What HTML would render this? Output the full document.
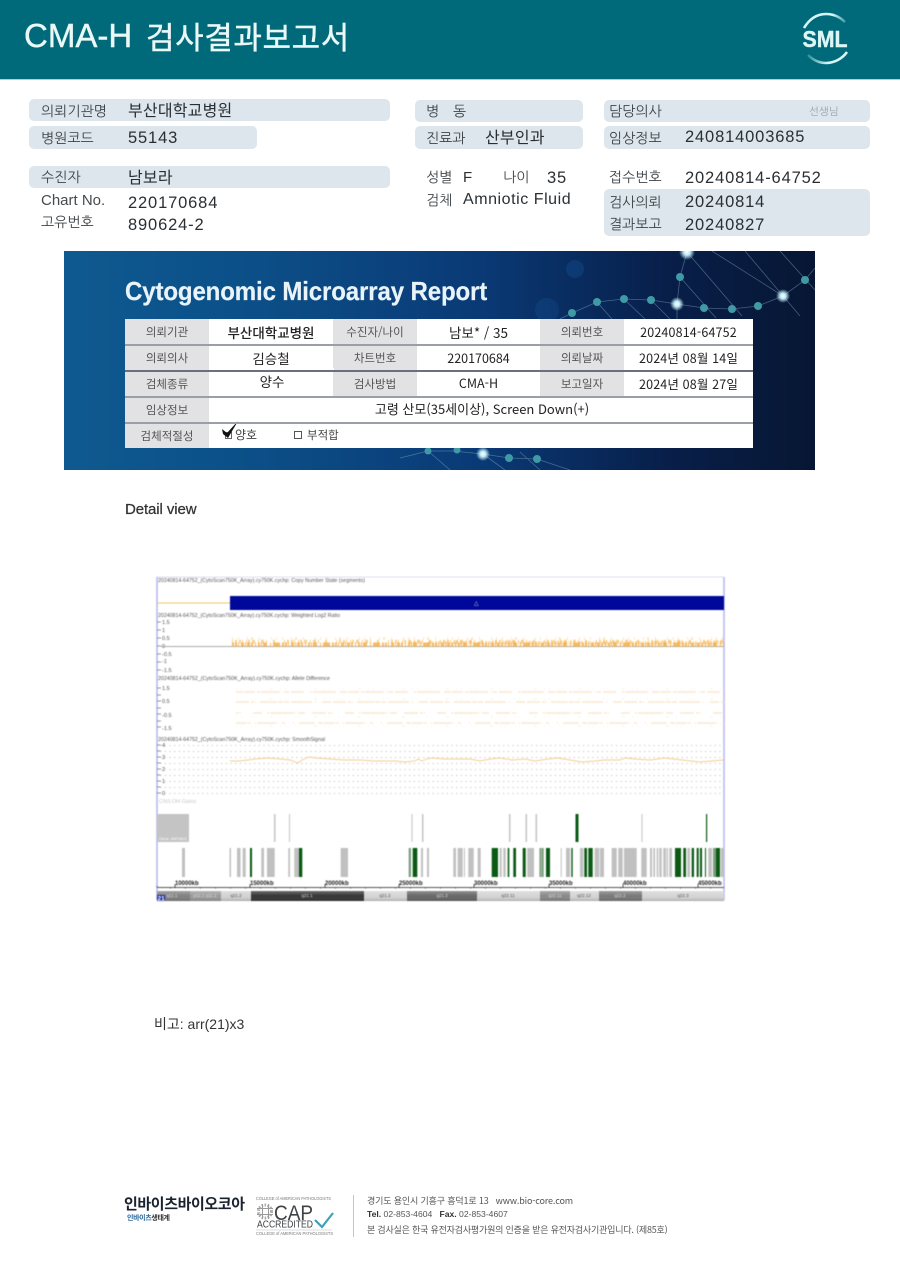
<!DOCTYPE html>
<html lang="ko"><head><meta charset="utf-8"><title>CMA-H 검사결과보고서</title>
<style>
html,body{margin:0;padding:0;background:#fff}
#p{position:relative;width:900px;height:1271px;overflow:hidden;background:#fff;font-family:"Liberation Sans","Noto Sans CJK KR",sans-serif;color:#2a2f33}
.t{position:absolute;white-space:nowrap;line-height:20px;height:20px}
.l{font-family:"NanumGothic","Noto Sans CJK KR",sans-serif;font-size:14px;color:#3d4347}
.v{font-size:16.5px;letter-spacing:.85px;color:#2a2f33}
.k{font-family:"Noto Sans CJK KR",sans-serif;font-size:16px;letter-spacing:.2px;color:#2a2f33}
.b{position:absolute;background:#dce6ec;border-radius:5px}
.c{position:absolute;display:flex;align-items:center;justify-content:center;box-sizing:border-box;font-family:"Noto Sans CJK KR",sans-serif;white-space:nowrap}
.h{background:#e2e2e4;color:#555;font-size:11.5px}
.d{background:#fff;color:#222;font-size:12.5px}
.r{position:absolute;left:125px;width:628px;height:2px;background:#9a9ea6}
</style></head><body><div id="p">

<div style="position:absolute;left:0;top:0;width:900px;height:79px;background:#006a7a;border-bottom:1px solid #8fdce0"></div>
<div class="t" style="left:24px;top:16px;height:40px;line-height:40px;font-size:33px;color:#eaf8f8;-webkit-text-stroke:.4px #eaf8f8">CMA-H</div>
<div class="t" style="left:146px;top:16px;height:40px;line-height:40px;font-family:'Noto Sans CJK KR',sans-serif;font-size:31px;letter-spacing:.6px;color:#eaf8f8;-webkit-text-stroke:.4px #eaf8f8">검사결과보고서</div>

<svg style="position:absolute;left:790px;top:5px" width="70" height="65" viewBox="0 0 70 65">
<defs><linearGradient id="a1" x1="0" x2="1"><stop offset="0" stop-color="#d8f5f3"/><stop offset=".7" stop-color="#d8f5f3"/><stop offset="1" stop-color="#3f9ea6"/></linearGradient>
<linearGradient id="a2" x1="0" x2="1"><stop offset="0" stop-color="#2f8f9a"/><stop offset=".5" stop-color="#d8f5f3"/><stop offset="1" stop-color="#d8f5f3"/></linearGradient></defs>
<path d="M14 23C20 13 28 9 36 9C44 9 50 12 55 17" fill="none" stroke="url(#a1)" stroke-width="2.6"/>
<path d="M18 50C24 56 30 58 36 58C44 58 52 54 57 47" fill="none" stroke="url(#a2)" stroke-width="2.6"/>
<text x="12.500" y="42" font-family="Liberation Sans" font-weight="700" font-size="23" fill="#dcf6f4" stroke="#dcf6f4" stroke-width=".4" textLength="45" lengthAdjust="spacingAndGlyphs">SML</text>
</svg>

<div class="b" style="left:29px;top:99px;width:361px;height:22px"></div>
<div class="b" style="left:29px;top:126px;width:228px;height:23px"></div>
<div class="b" style="left:29px;top:166px;width:361px;height:22px"></div>
<div class="b" style="left:415px;top:100px;width:168px;height:22px"></div>
<div class="b" style="left:415px;top:126px;width:168px;height:23px"></div>
<div class="b" style="left:604px;top:100px;width:266px;height:22px"></div>
<div class="b" style="left:604px;top:126px;width:266px;height:23px"></div>
<div class="b" style="left:604px;top:189px;width:266px;height:47px"></div>

<div class="t l" style="left:41px;top:102px">의뢰기관명</div>
<div class="t k" style="left:128px;top:99px">부산대학교병원</div>
<div class="t l" style="left:41px;top:129px">병원코드</div>
<div class="t v" style="left:128px;top:128px">55143</div>
<div class="t l" style="left:41px;top:168px">수진자</div>
<div class="t k" style="left:128px;top:166px">남보라</div>
<div class="t" style="left:41px;top:191px;font-size:15px;color:#454b4f">Chart No.</div>
<div class="t v" style="left:128px;top:193px">220170684</div>
<div class="t l" style="left:41px;top:213px">고유번호</div>
<div class="t v" style="left:128px;top:215px">890624-2</div>

<div class="t l" style="left:426px;top:102px">병</div>
<div class="t l" style="left:453px;top:102px">동</div>
<div class="t l" style="left:426px;top:129px">진료과</div>
<div class="t k" style="left:485px;top:126px">산부인과</div>
<div class="t l" style="left:426px;top:168px">성별</div>
<div class="t v" style="left:463px;top:168px;font-size:15px">F</div>
<div class="t l" style="left:503px;top:168px">나이</div>
<div class="t v" style="left:547px;top:168px">35</div>
<div class="t l" style="left:426px;top:191px">검체</div>
<div class="t" style="left:463px;top:190px;font-size:16px;color:#2a2f33;letter-spacing:.55px">Amniotic Fluid</div>

<div class="t l" style="left:609px;top:102px">담당의사</div>
<div class="t" style="left:809px;top:102px;font-family:'NanumGothic',sans-serif;font-size:10.5px;color:#9aa3a8">선생님</div>
<div class="t l" style="left:609px;top:129px">임상정보</div>
<div class="t v" style="left:685px;top:127px">240814003685</div>
<div class="t l" style="left:609px;top:168px">접수번호</div>
<div class="t v" style="left:685px;top:168px">20240814-64752</div>
<div class="t l" style="left:609px;top:193px">검사의뢰</div>
<div class="t v" style="left:685px;top:192px">20240814</div>
<div class="t l" style="left:609px;top:215px">결과보고</div>
<div class="t v" style="left:685px;top:215px">20240827</div>

<!-- banner -->
<svg style="position:absolute;left:64px;top:251px;filter:blur(.3px)" width="751" height="219" viewBox="64 251 751 219">
<defs>
<linearGradient id="bg" x1="0" x2="1" y1="0" y2="0"><stop offset="0" stop-color="#0e5a90"/><stop offset=".25" stop-color="#0c4f88"/><stop offset=".55" stop-color="#0a3a76"/><stop offset=".8" stop-color="#081f4a"/><stop offset="1" stop-color="#071633"/></linearGradient>
<radialGradient id="gl"><stop offset="0" stop-color="#fff"/><stop offset=".4" stop-color="#bfe9f5"/><stop offset="1" stop-color="#bfe9f5" stop-opacity="0"/></radialGradient>
</defs>
<rect x="64" y="251" width="751" height="219" fill="url(#bg)"/>
<g fill="none" stroke="#9fc6d8" stroke-opacity=".4" stroke-width=".8">
<path d="M560 319L572 313L597 302L624 299L651 300L677 304L704 308L732 309L758 306L783 296L805 280L815 268"/>
<path d="M687 252L680 277L677 304M687 252L742 316M712 251L783 296M745 251L800 316M780 251L815 290M680 277L716 318M597 302L612 319M624 299L645 319M651 300L670 319M677 304L677 319"/>
<path d="M400 458L428 451L453 451L483 454L509 458L537 459L570 470M428 451L450 470M483 454L505 470M520 452L540 470"/>
</g>
<g fill="#3f9aa6"><circle cx="572" cy="313" r="4"/><circle cx="597" cy="302" r="4"/><circle cx="624" cy="299" r="4"/><circle cx="651" cy="300" r="4"/><circle cx="704" cy="308" r="4"/><circle cx="732" cy="309" r="4"/><circle cx="758" cy="306" r="4"/><circle cx="805" cy="280" r="4"/><circle cx="680" cy="277" r="4"/><circle cx="428" cy="451" r="3.5"/><circle cx="457" cy="450" r="3.5"/><circle cx="509" cy="458" r="4"/><circle cx="537" cy="459" r="4"/></g>
<circle cx="677" cy="304" r="7" fill="url(#gl)"/><circle cx="783" cy="296" r="7" fill="url(#gl)"/><circle cx="687" cy="252" r="8" fill="url(#gl)"/><circle cx="483" cy="454" r="7" fill="url(#gl)"/>
<circle cx="575" cy="269" r="9" fill="#1b62b0" opacity=".25"/><circle cx="547" cy="310" r="12" fill="#1b62b0" opacity=".2"/>
</svg>
<div class="t" style="left:125px;top:274px;height:34px;line-height:34px;font-size:26px;font-weight:700;color:#e8f4fa;letter-spacing:-.15px;transform:scaleX(.925);transform-origin:left center;-webkit-text-stroke:.2px #e8f4fa">Cytogenomic Microarray Report</div>

<div style="position:absolute;left:125px;top:319px;width:628px;height:129px;background:#fff"></div>
<div class="c h" style="left:125px;top:319px;width:84px;height:25px">의뢰기관</div>
<div class="c d" style="left:209px;top:319px;width:124px;height:25px;font-size:13.5px;font-weight:500">부산대학교병원</div>
<div class="c h" style="left:333px;top:319px;width:84px;height:25px">수진자/나이</div>
<div class="c d" style="left:417px;top:319px;width:123px;height:25px;font-size:13.5px">남보* / 35</div>
<div class="c h" style="left:540px;top:319px;width:84px;height:25px">의뢰번호</div>
<div class="c d" style="left:624px;top:319px;width:129px;height:25px;letter-spacing:.15px">20240814-64752</div>

<div class="c h" style="left:125px;top:345px;width:84px;height:25px">의뢰의사</div>
<div class="c d" style="left:209px;top:345px;width:124px;height:25px;font-size:13.5px">김승철</div>
<div class="c h" style="left:333px;top:345px;width:84px;height:25px">차트번호</div>
<div class="c d" style="left:417px;top:345px;width:123px;height:25px">220170684</div>
<div class="c h" style="left:540px;top:345px;width:84px;height:25px">의뢰날짜</div>
<div class="c d" style="left:624px;top:345px;width:129px;height:25px;letter-spacing:.15px">2024년 08월 14일</div>

<div class="c h" style="left:125px;top:371px;width:84px;height:25px">검체종류</div>
<div class="c d" style="left:210px;top:368px;width:124px;height:25px;font-size:13.5px">양수</div>
<div class="c h" style="left:333px;top:371px;width:84px;height:25px">검사방법</div>
<div class="c d" style="left:417px;top:370px;width:123px;height:25px">CMA-H</div>
<div class="c h" style="left:540px;top:371px;width:84px;height:25px">보고일자</div>
<div class="c d" style="left:624px;top:371px;width:129px;height:25px;letter-spacing:.15px">2024년 08월 27일</div>

<div class="c h" style="left:125px;top:397px;width:84px;height:25px">임상정보</div>
<div class="c d" style="left:209px;top:396px;width:544px;height:25px;font-size:13px"><span style="position:relative;left:1px">고령 산모(35세이상), Screen Down(+)</span></div>
<div class="c h" style="left:125px;top:423px;width:84px;height:25px">검체적절성</div>
<div class="t" style="left:235px;top:425px;font-family:'Noto Sans CJK KR',sans-serif;font-size:12px;color:#444">양호</div>
<div class="t" style="left:307px;top:425px;font-family:'Noto Sans CJK KR',sans-serif;font-size:11.5px;color:#444">부적합</div>
<div style="position:absolute;left:225px;top:432px;width:5px;height:5px;border:1px solid #666"></div>
<div style="position:absolute;left:294px;top:431px;width:6px;height:6px;border:1px solid #555"></div>
<svg style="position:absolute;left:220px;top:420px" width="20" height="20"><path d="M2 9L7 13L18 1L8 18L3 14Z" fill="#111"/></svg>
<div class="r" style="top:344px;height:1.5px"></div>
<div class="r" style="top:370px;background:#6a7080;height:1.5px"></div>
<div class="r" style="top:396px;height:1.5px"></div>
<div class="r" style="top:422px;height:1.5px"></div>

<div class="t" style="left:125px;top:500px;font-size:15px;letter-spacing:-.1px;color:#333;-webkit-text-stroke:.25px #333">Detail view</div>

<!-- chart -->
<svg style="position:absolute;left:150px;top:570px;filter:blur(.5px)" width="580" height="336" viewBox="150 570 580 336" font-family="Liberation Sans">
<rect x="156" y="577" width="568" height="324" fill="#fff"/>
<path d="M157 577V900M724 577V900" stroke="#b9b9ee" stroke-width="1.6"/>
<path d="M156 577H724" stroke="#d5d5f3" stroke-width=".8"/>
<g font-size="5.6" fill="#555">
<text x="158" y="582" textLength="207" lengthAdjust="spacingAndGlyphs">20240814-64752_(CytoScan750K_Array).cy750K.cychp: Copy Number State (segments)</text>
<text x="158" y="617" textLength="182" lengthAdjust="spacingAndGlyphs">20240814-64752_(CytoScan750K_Array).cy750K.cychp: Weighted Log2 Ratio</text>
<text x="158" y="680" textLength="172" lengthAdjust="spacingAndGlyphs">20240814-64752_(CytoScan750K_Array).cy750K.cychp: Allele Difference</text>
<text x="158" y="741" textLength="167" lengthAdjust="spacingAndGlyphs">20240814-64752_(CytoScan750K_Array).cy750K.cychp: SmoothSignal</text>
<text x="162" y="624">1.5</text><text x="162" y="632">1</text><text x="162" y="640">0.5</text><text x="162" y="648">0</text><text x="162" y="656">-0.5</text><text x="162" y="663">-1</text><text x="162" y="672">-1.5</text>
<text x="162" y="690">1.5</text><text x="162" y="703">0.5</text><text x="162" y="717">-0.5</text><text x="162" y="730">-1.5</text>
<text x="162" y="747">4</text><text x="162" y="759">3</text><text x="162" y="771">2</text><text x="162" y="783">1</text><text x="162" y="795">0</text>
<text x="159" y="803" fill="#c8c8c8">CN/LOH Gains</text>
</g>
<path d="M157 622h4M157 630h4M157 638h4M157 646h4M157 654h4M157 662h4M157 670h4M157 688h4M157 695h4M157 701h4M157 708h4M157 714h4M157 721h4M157 727h4M157 745h4M157 751h4M157 757h4M157 763h4M157 769h4M157 775h4M157 781h4M157 787h4M157 793h4" stroke="#777" stroke-width=".7"/>

<path d="M157 603H230" stroke="#f3c665" stroke-width="1"/>
<rect x="230" y="596" width="494" height="14" fill="#00089a"/>
<text x="474" y="605" font-size="6" fill="#ccc">△</text>

<path d="M161 646.500H724" stroke="#aaa" stroke-width=".9"/>
<g fill="none" stroke="#f4a52c">
<path d="M232 644.500H724" stroke-width="4" stroke-opacity=".75" stroke-dasharray="2 1 2 1 1 2 3 1 1 1 3 1 2 2 1 2 2 1 1 1 4 3 1 2 7 2"/>
<path d="M232 641.500H724" stroke-width="3.500" stroke-opacity=".5" stroke-dasharray="1 2 2 2 2 1 1 3 1 1 2 2 3 3 1 2 3 2 1 6 2 9"/>
<path d="M232 638.500H724" stroke-width="2.500" stroke-opacity=".3" stroke-dasharray="1 5 1 8 1 3 2 6 1 11 1 4"/>
<path d="M410 643H724" stroke-width="4" stroke-opacity=".35" stroke-dasharray="2 1 3 2 1 1 2 6 5 2"/>
</g>
<g fill="none" stroke="#fbe3c6" stroke-width="1.300">
<path d="M236 692H724" stroke-dasharray="7 1 11 2 3 1 19 3 1 1 4 2 13 6 2 1 23 4"/>
<path d="M236 702H724" stroke-dasharray="13 2 3 1 1 4 17 1 5 1 5 2 21 3 1 6 9 2"/>
<path d="M236 713H724" stroke-dasharray="3 1 1 12 9 5 2 1 24 1 1 2 7 7 14 2"/>
<path d="M236 723H724" stroke-dasharray="11 1 3 3 1 2 19 1 1 4 3 8 1 5 16 3 5 1"/>
<path d="M236 689H724M236 699H724M236 717H724M236 726H724" stroke-width="1" stroke-opacity=".5" stroke-dasharray="1 4 1 9 1 3 1 14 3 7"/>
</g>
<g stroke="#c4c4c4" stroke-width="1.100" stroke-dasharray="1.200 3.500"><path d="M160 745.500H724M160 751.500H724M160 757.500H724M160 763.500H724M160 769.500H724M160 775.500H724M160 781.500H724M160 787.500H724M160 793.500H724"/></g>
<polyline fill="none" stroke="#f3cd8f" stroke-width=".9" points="230,761 240,761 248,760 255,759 268,758 280,759 290,760 298,763 302,760 309,757 316,758 330,759 345,760 360,760 375,761 395,761 405,762 415,761 418,759 422,761 426,759 432,758 445,759 470,759 480,761 490,759 500,758 512,760 525,759 535,761 548,759 558,758 570,760 582,762 595,761 605,760 620,760 625,758 635,759 650,760 665,758 682,760 700,762 712,761 724,760"/>

<rect x="157" y="814" width="32" height="28" fill="#c4c4c4"/>
<text x="159" y="840" font-size="4" fill="#fff">Gene: AMYAD1</text>
<path d="M274 814h1.500v28h-1.500zM289 814h1v28h-1zM411.500 814h1v28h-1zM422 814h1.500v28h-1.500zM509 814h1.500v28h-1.500zM525.500 814h1.500v28h-1.500zM535.500 814h1.500v28h-1.500zM641.500 814h1v28h-1z" fill="#c4c4c4"/>
<path d="M575.500 814h3v28h-3zM706 814h1.200v28h-1.200z" fill="#0a5a14"/>

<path fill="#c0c0c0" d="M182 848h3v29h-3zM229.500 848h1.500v29h-1.500zM237 848h3.500v29h-3.500zM242.700 848h3v29h-3zM261.300 848h2.700v29h-2.700zM267 848h7.700v29h-7.700zM288.300 848h1.700v29h-1.700zM294.300 848h4.700v29h-4.700zM340.700 848h7.300v29h-7.300zM421 848h2v29h-2zM427 848h2v29h-2zM453.300 848h2.700v29h-2.700zM457.700 848h5v29h-5zM464 848h1v29h-1zM468.300 848h5.400v29h-5.400zM477.700 848h3v29h-3zM499.700 848h2v29h-2zM503.300 848h2.400v29h-2.400zM527.300 848h6.700v29h-6.700zM539.300 848h1.300v29h-1.300zM560.700 848h1v29h-1zM566 848h4v29h-4zM580 848h3.300v29h-3.300zM594.700 848h4.600v29h-4.600zM600 848h4v29h-4zM611.700 848h5v29h-5zM618.300 848h4.400v29h-4.400zM624 848h12.700v29h-12.700zM641.300 848h5.400v29h-5.400zM650 848h2v29h-2zM653.300 848h1.700v29h-1.700zM656.700 848h1.600v29h-1.600zM659.300 848h2.400v29h-2.400zM663.300 848h2.700v29h-2.700zM666.700 848h1.300v29h-1.300zM669.300 848h2.700v29h-2.700zM687.300 848h2.700v29h-2.700zM708.300 848h3.700v29h-3.700zM720.700 848h3v29h-3z"/>
<path fill="#0a5a14" d="M250 848h2v29h-2zM299 848h3.300v29h-3.300zM412.700 848h4.600v29h-4.600zM491.700 848h6.300v29h-6.300zM507.700 848h1.600v29h-1.600zM513.300 848h2.700v29h-2.700zM522.700 848h3v29h-3zM546 848h4v29h-4zM571.300 848h1.400v29h-1.400zM584.300 848h2.700v29h-2.700zM588.300 848h4.400v29h-4.400zM675 848h6v29h-6zM683.300 848h2.700v29h-2.700zM691.700 848h2.300v29h-2.300zM696.700 848h2v29h-2zM700 848h2v29h-2zM705 848h1v29h-1zM716 848h4v29h-4z"/>
<path fill="#7d9d80" d="M408.700 848h2.300v29h-2.300zM539.500 848h1.500v29h-1.500zM713 848h3v29h-3zM541.300 848h2.400v29h-2.400z"/>

<path d="M157 887.500H724" stroke="#555" stroke-width=".9"/>
<path d="M175 884v4M250 884v4M325 884v4M399 884v4M474 884v4M549 884v4M623 884v4M698 884v4" stroke="#333" stroke-width=".8"/>
<path d="M157 886v2H724" stroke="#555" stroke-width=".9" stroke-dasharray="1 14" fill="none"/>
<g font-size="6" font-weight="700" fill="#222">
<text x="175" y="885">10000kb</text><text x="250" y="885">15000kb</text><text x="325" y="885">20000kb</text><text x="399" y="885">25000kb</text><text x="474" y="885">30000kb</text><text x="549" y="885">35000kb</text><text x="623" y="885">40000kb</text><text x="698" y="885">45000kb</text>
</g>
<defs><linearGradient id="sh" x1="0" x2="0" y1="0" y2="1"><stop offset="0" stop-color="#fff" stop-opacity=".28"/><stop offset=".5" stop-color="#fff" stop-opacity="0"/><stop offset="1" stop-color="#000" stop-opacity=".2"/></linearGradient></defs>
<rect x="157" y="891" width="33" height="10" fill="#808080"/>
<rect x="190" y="891" width="31" height="10" fill="#999"/>
<rect x="221" y="891" width="30" height="10" fill="#d2d2d2"/>
<rect x="251" y="891" width="113" height="10" fill="#333"/>
<rect x="364" y="891" width="43" height="10" fill="#d4d4d4"/>
<rect x="407" y="891" width="70" height="10" fill="#666"/>
<rect x="477" y="891" width="63" height="10" fill="#d4d4d4"/>
<rect x="540" y="891" width="30" height="10" fill="#888"/>
<rect x="570" y="891" width="29" height="10" fill="#d4d4d4"/>
<rect x="599" y="891" width="43" height="10" fill="#777"/>
<rect x="642" y="891" width="82" height="10" fill="#d4d4d4"/>
<rect x="157" y="891" width="567" height="10" fill="url(#sh)"/>
<rect x="157" y="895" width="8" height="6" fill="#1c2fa0"/>
<text x="157.500" y="900.500" font-size="6.500" font-weight="700" fill="#fff">21</text>
<g font-size="4.500" text-anchor="middle">
<g fill="#ddd"><text x="172" y="897">q11.1</text><text x="205" y="897">p11.1 q11.2</text><text x="307" y="897">q21.1</text><text x="442" y="897">q21.3</text><text x="555" y="897">q22.11</text><text x="620" y="897">q22.2</text></g>
<g fill="#555"><text x="236" y="897">q21.2</text><text x="385" y="897">q21.2</text><text x="508" y="897">q22.11</text><text x="584" y="897">q22.12</text><text x="683" y="897">q22.3</text></g>
</g>
</svg>

<div class="t" style="left:154px;top:1014px;font-size:14px;color:#333">비고: arr(21)x3</div>

<!-- footer -->
<div class="t" style="left:124px;top:1193px;height:22px;line-height:22px;font-family:'Noto Sans CJK KR',sans-serif;font-weight:700;font-size:15px;letter-spacing:-.4px;color:#1a2230">인바이츠바이오코아</div>
<div class="t" style="left:127px;top:1208px;font-family:'Noto Sans CJK KR',sans-serif;font-weight:700;font-size:7px;letter-spacing:-.35px;color:#2b6a9a">인바이츠<span style="color:#333">생태계</span></div>

<svg style="position:absolute;left:252px;top:1192px;filter:blur(.3px)" width="90" height="48" viewBox="252 1192 90 48" font-family="Liberation Sans">
<text x="256" y="1200" font-size="4.600" fill="#777" textLength="75" lengthAdjust="spacingAndGlyphs">COLLEGE of AMERICAN PATHOLOGISTS</text>
<g fill="#9a9a9a"><circle cx="265" cy="1211.500" r="6.500" fill="none" stroke="#aaa" stroke-dasharray="1.500 1.500" stroke-width="3"/><path d="M257 1208h16v1h-16zM257 1214h16v1h-16zM262 1204h1v15h-1zM268 1204h1v15h-1z"/></g>
<text x="274" y="1220" font-size="21" fill="#3f4245" textLength="39" lengthAdjust="spacingAndGlyphs">CAP</text>
<text x="257" y="1227.500" font-size="10.500" fill="#3f4245" textLength="56" lengthAdjust="spacingAndGlyphs">ACCREDITED</text>
<path d="M315 1220L322 1227L333 1213" fill="none" stroke="#3ca1ba" stroke-width="2.200"/>
<path d="M256 1230H332" stroke="#bbb" stroke-width=".6"/>
<text x="256" y="1235" font-size="4.600" fill="#777" textLength="77" lengthAdjust="spacingAndGlyphs">COLLEGE of AMERICAN PATHOLOGISTS</text>
</svg>

<div style="position:absolute;left:353px;top:1195px;width:1px;height:42px;background:#c4c4c4"></div>
<div class="t" style="left:367px;top:1191px;font-family:'Noto Sans CJK KR',sans-serif;font-size:9px;letter-spacing:-.15px;color:#555">경기도 용인시 기흥구 흥덕1로 13 &nbsp;&nbsp;www.bio-core.com</div>
<div class="t" style="left:367px;top:1204px;font-size:8.600px;color:#555"><b style="color:#333">Tel.</b> 02-853-4604 &nbsp;&nbsp;<b style="color:#333">Fax.</b> 02-853-4607</div>
<div class="t" style="left:367px;top:1220px;font-family:'Noto Sans CJK KR',sans-serif;font-size:9px;letter-spacing:-.2px;color:#555">본 검사실은 한국 유전자검사평가원의 인증을 받은 유전자검사기관입니다. (제85호)</div>

</div></body></html>
